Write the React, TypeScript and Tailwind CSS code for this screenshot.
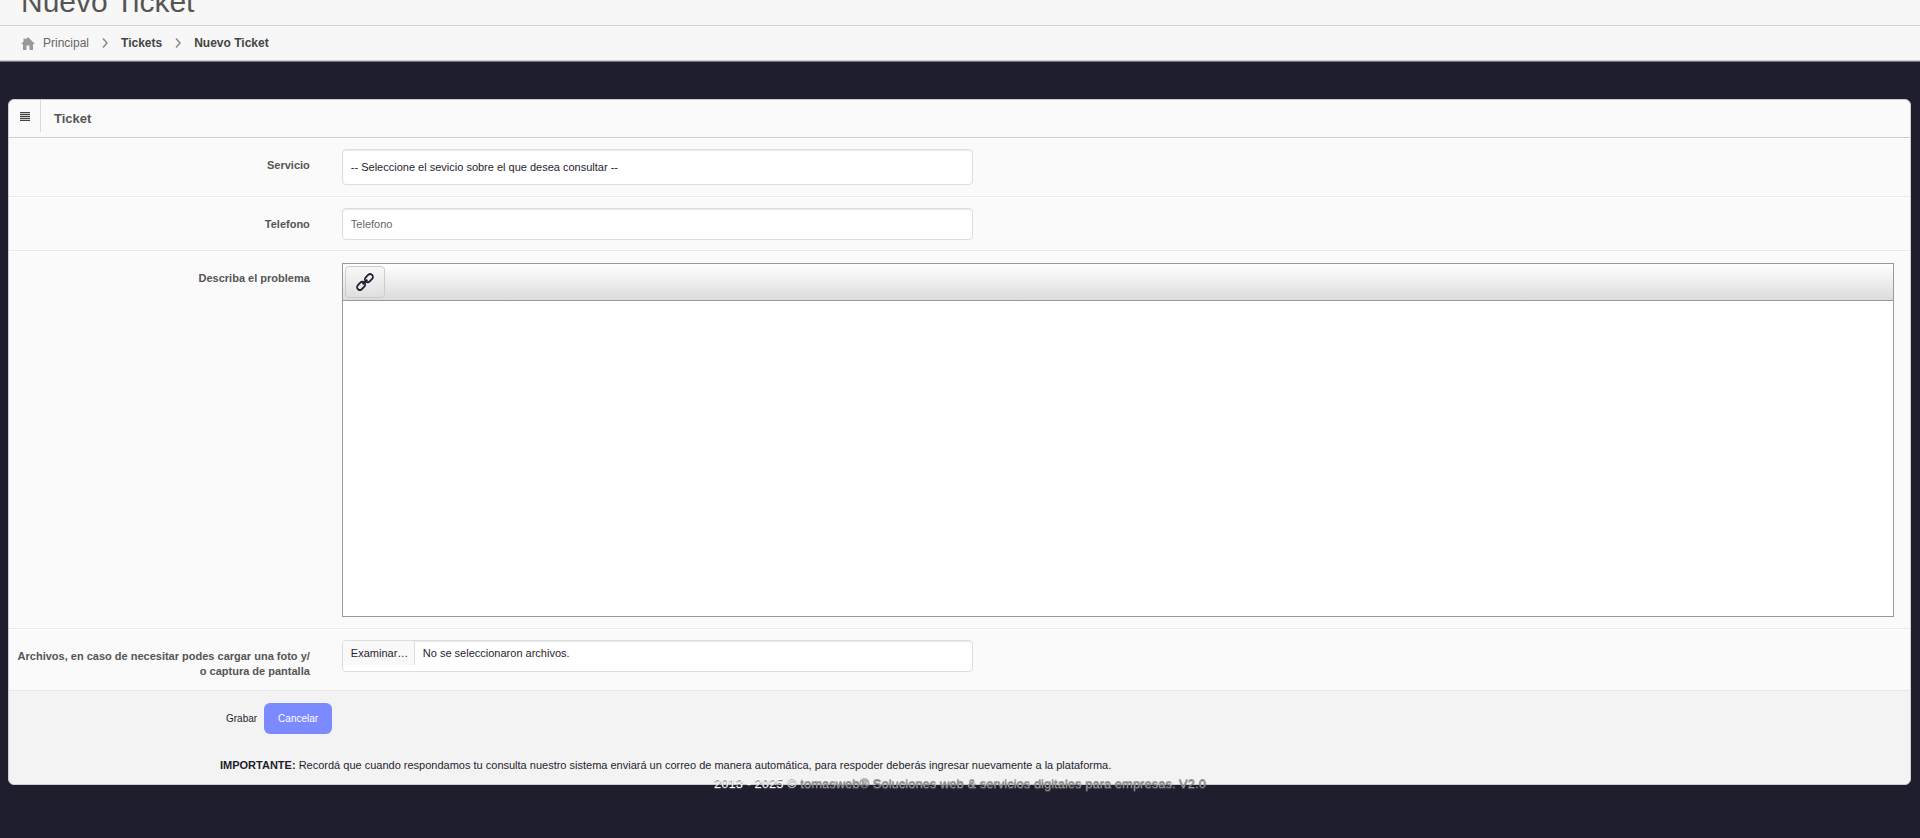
import type { ReactNode } from "react";

const crumbChevron = (
  <svg className="h-2.5 w-1.5" viewBox="0 0 6 10" fill="none" stroke="#8a8a8a" strokeWidth="1.5">
    <path d="M1 0.5 L5 5 L1 9.5" />
  </svg>
);

function Row({ label, htmlFor, children }: { label: string; htmlFor: string; children: ReactNode }) {
  return (
    <div className="flex border-t border-b border-t-white border-b-[#e9e9e9] py-[10px]">
      <label
        htmlFor={htmlFor}
        className="w-1/6 shrink-0 pt-[9px] pr-4 pb-px pl-1 text-right text-[11px] leading-[15px] font-bold text-[#555]"
      >
        {label}
      </label>
      <div className="min-w-0 flex-1 px-4">{children}</div>
    </div>
  );
}

export default function App() {
  return (
    <div className="min-h-screen bg-[#1f1e2e] font-['Liberation_Sans',Arial,sans-serif] text-[#1f1e2e]">
      <header className="border-b border-[#777] bg-[#f7f7f7]">
        <div className="h-[26px] overflow-hidden border-b border-[#d2d2d2] px-[21px]">
          <h1 className="-mt-3 text-[30px] leading-[28px] text-[#555]">Nuevo Ticket</h1>
        </div>
        <nav className="flex h-[35px] items-center gap-[13px] border-b border-[#ccc] px-[21px] text-[12px] text-[#444]">
          <a href="#" className="flex items-center gap-2 text-[#666]">
            <svg className="h-3.5 w-3.5" viewBox="0 0 14 14" fill="#999">
              <path d="M7 1 L14 8 H12 V14 H8.5 V9.5 H5.5 V14 H2 V8 H0 L2.5 5.5 V2.5 H4.5 V3.5 Z" />
            </svg>
            Principal
          </a>
          {crumbChevron}
          <a href="#" className="font-bold">Tickets</a>
          {crumbChevron}
          <a href="#" className="font-bold">Nuevo Ticket</a>
        </nav>
      </header>

      <main className="pt-[37px] pr-[9px] pl-2">
        <section className="rounded-md border border-[#cdcdcd] bg-[#fafafa]">
          <div className="flex h-[38px] border-b border-[#cdcdcd]">
            <span className="flex h-8 w-8 items-center justify-center border-r border-[#d8d8d8]">
              <svg className="h-3 w-2.5" viewBox="0 0 10 12" fill="#444">
                <path d="M0 2h10v1H0zM0 4h10v1H0zM0 6h10v1H0zM0 8h10v1H0zM0 10h10v1H0z" />
                <path d="M0 3h10v1H0zM0 5h10v1H0zM0 7h10v1H0zM0 9h10v1H0z" opacity="0.25" />
              </svg>
            </span>
            <h5 className="px-[13px] text-[13px] leading-[38px] font-bold text-[#555]">Ticket</h5>
          </div>

          <form>
            <Row label="Servicio" htmlFor="servicio">
              <select
                id="servicio"
                className="mb-px block h-9 w-full max-w-[631px] appearance-none rounded border border-[#ddd] bg-white px-2 text-[11px] shadow-[inset_0_1px_1px_rgba(0,0,0,0.08)]"
              >
                <option>-- Seleccione el sevicio sobre el que desea consultar --</option>
              </select>
            </Row>
            <Row label="Telefono" htmlFor="telefono">
              <input
                id="telefono"
                type="text"
                placeholder="Telefono"
                className="block h-8 w-full max-w-[631px] rounded border border-[#ddd] bg-white px-2 text-[11px] shadow-[inset_0_1px_1px_rgba(0,0,0,0.08)] placeholder:text-[#666]"
              />
            </Row>
            <Row label="Describa el problema" htmlFor="problema">
              <div className="my-px border border-[#999] bg-white">
                <div className="flex h-[37px] items-start border-b border-[#999] bg-linear-to-b from-white to-[#dcdcdc] p-0.5">
                  <button
                    type="button"
                    aria-label="Insertar enlace"
                    className="flex h-8 w-10 items-center justify-center rounded-sm border border-[#ccc] bg-linear-to-b from-[#f8f8f8] to-[#e0e0e0]"
                  >
                    <svg className="h-[18px] w-[18px]" viewBox="0 0 18 18" fill="none" stroke="#1f1e2e" strokeWidth="1.8">
                      <rect x="-4.5" y="-2.8" width="9" height="5.6" rx="2.8" transform="translate(12.9 5.1) rotate(-45)" />
                      <rect x="-4.5" y="-2.8" width="9" height="5.6" rx="2.8" transform="translate(5.1 12.9) rotate(-45)" />
                      <path d="M6.6 11.4 L11.4 6.6" />
                    </svg>
                  </button>
                </div>
                <textarea id="problema" className="block h-[315px] w-full resize-none bg-white p-2 text-[11px] outline-none" />
              </div>
            </Row>
            <Row label="Archivos, en caso de necesitar podes cargar una foto y/ o captura de pantalla" htmlFor="archivos">
              <label
                htmlFor="archivos"
                className="relative flex h-8 w-full max-w-[631px] items-start overflow-hidden rounded border border-[#ddd] bg-white text-[11px] leading-6 shadow-[inset_0_1px_1px_rgba(0,0,0,0.08)]"
              >
                <span className="w-[72px] border-r border-[#ddd] bg-[#f9f9f9] pl-2">Examinar…</span>
                <span className="px-2">No se seleccionaron archivos.</span>
                <input id="archivos" type="file" className="sr-only" />
              </label>
            </Row>

            <div className="rounded-b-md bg-[#f3f3f3] pt-3 pb-[11px]">
              <div className="flex items-center gap-[7px] pl-[217px] text-[10px]">
                <button type="submit">Grabar</button>
                <button type="button" className="h-[31px] w-[68px] rounded-md bg-[#7b8aff] text-white">Cancelar</button>
              </div>
              <p className="mt-6 pl-[211px] text-[11px] leading-[15px]">
                <strong>IMPORTANTE:</strong> Recordá que cuando respondamos tu consulta nuestro sistema enviará un
                correo de manera automática, para respoder deberás ingresar nuevamente a la plataforma.
              </p>
            </div>
          </form>
        </section>
      </main>

      <footer className="relative -mt-2 text-center text-[13px] leading-[14px] text-[#999] [text-shadow:0_1px_1px_#555]">
        <span className="text-white">2013 - 2025 ©</span> tomasweb® Soluciones web &amp; servicios digitales para empresas. V2.0
      </footer>
    </div>
  );
}
